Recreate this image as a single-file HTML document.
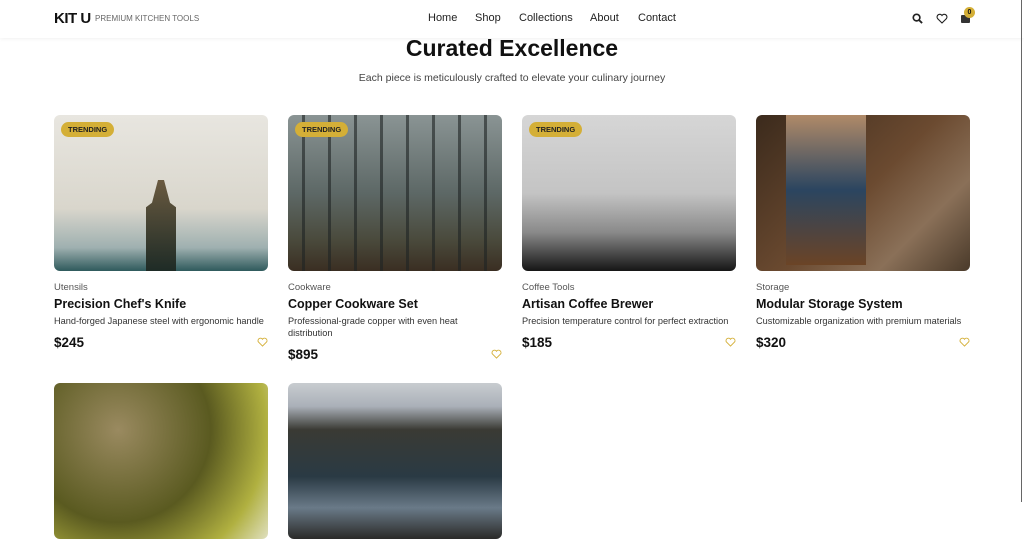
<!DOCTYPE html>
<html><head><style>
*{margin:0;padding:0;box-sizing:border-box}
body{width:1024px;height:502px;overflow:hidden;background:#fff;font-family:"Liberation Sans",sans-serif;color:#111;position:relative}
.hdr{position:absolute;left:0;top:0;width:1024px;height:38px;background:#fff;box-shadow:0 1px 4px rgba(0,0,0,.06);z-index:5}
.logo{position:absolute;left:54px;top:10px;font-size:15px;font-weight:bold;letter-spacing:-.5px}
.tag{position:absolute;left:95px;top:14px;font-size:8px;color:#666}
.nav{position:absolute;top:12px;font-size:11px;color:#222}
h1{position:absolute;top:35px;width:1024px;text-align:center;font-size:23px;font-weight:bold}
.sub{position:absolute;top:72px;width:1024px;text-align:center;font-size:10.5px;color:#444}
.card{position:absolute;width:214px}
.img{width:214px;height:156px;border-radius:6px;overflow:hidden;position:relative}
.badge{position:absolute;left:7px;top:7px;background:#d4af37;border-radius:8px;font-size:7.5px;font-weight:bold;padding:3px 7px;color:#222}
.cat{margin-top:11px;font-size:9.5px;color:#555}
.t{margin-top:4px;font-size:12.5px;font-weight:bold}
.d{margin-top:4px;font-size:9.2px;color:#333;line-height:12px;white-space:normal}
.p{margin-top:8px;font-size:13.5px;font-weight:bold;position:relative}
.p svg{position:absolute;right:0;top:2px}
</style></head><body>
<div class="hdr">
<div class="logo">KIT U</div><div class="tag">PREMIUM KITCHEN TOOLS</div>
<div class="nav" style="left:428px">Home</div>
<div class="nav" style="left:475px">Shop</div>
<div class="nav" style="left:519px">Collections</div>
<div class="nav" style="left:590px">About</div>
<div class="nav" style="left:638px">Contact</div>
<svg style="position:absolute;left:912px;top:13px" width="11" height="11" viewBox="0 0 12 12"><circle cx="5" cy="5" r="3.6" fill="none" stroke="#222" stroke-width="1.8"/><path d="M7.6 7.6 11 11" stroke="#222" stroke-width="2"/></svg>
<svg style="position:absolute;left:936px;top:13px" width="12" height="11" viewBox="0 0 24 22"><path d="M12 20 3 11a5 5 0 0 1 9-6 5 5 0 0 1 9 6z" fill="none" stroke="#222" stroke-width="2.2"/></svg>
<div style="position:absolute;left:961px;top:15px;width:9px;height:8px;background:#333;border-radius:1px"></div>
<div style="position:absolute;left:964px;top:7px;width:11px;height:11px;border-radius:50%;background:#d4af37;font-size:7px;text-align:center;line-height:11px;font-weight:bold">0</div>
</div>
<div style="position:absolute;right:2px;top:0;width:1px;height:502px;background:#666;z-index:6"></div>
<h1>Curated Excellence</h1>
<div class="sub">Each piece is meticulously crafted to elevate your culinary journey</div>

<div class="card" style="left:54px;top:115px"><div class="img" style="background:linear-gradient(180deg,#e8e6e0,#d9d6cc 60%,#9fb0b0 85%,#2f5a5c)"><div style="position:absolute;left:92px;top:65px;width:30px;height:91px;background:linear-gradient(#6a5a40,#1e2b26);clip-path:polygon(40% 0,60% 0,80% 25%,100% 30%,100% 100%,0 100%,0 30%,20% 25%)"></div><div class="badge">TRENDING</div></div>
<div class="cat">Utensils</div><div class="t">Precision Chef's Knife</div><div class="d" style="white-space:nowrap">Hand-forged Japanese steel with ergonomic handle</div><div class="p">$245<svg width="11" height="10" viewBox="0 0 24 22"><path d="M12 20 3 11a5 5 0 0 1 9-6 5 5 0 0 1 9 6z" fill="none" stroke="#d4af37" stroke-width="2"/></svg></div></div>

<div class="card" style="left:288px;top:115px"><div class="img" style="background:linear-gradient(180deg,#8a9494,#5d6866 50%,#4a4a3c 80%,#3a2e22);"><div style="position:absolute;inset:0;background:repeating-linear-gradient(90deg,transparent 0 14px,rgba(30,35,35,.6) 14px 17px,transparent 17px 26px)"></div><div class="badge">TRENDING</div></div>
<div class="cat">Cookware</div><div class="t">Copper Cookware Set</div><div class="d">Professional-grade copper with even heat<br>distribution</div><div class="p">$895<svg width="11" height="10" viewBox="0 0 24 22"><path d="M12 20 3 11a5 5 0 0 1 9-6 5 5 0 0 1 9 6z" fill="none" stroke="#d4af37" stroke-width="2"/></svg></div></div>

<div class="card" style="left:522px;top:115px"><div class="img" style="background:linear-gradient(180deg,#d6d6d6,#c4c4c4 50%,#8a8a8a 75%,#151515)"><div class="badge">TRENDING</div></div>
<div class="cat">Coffee Tools</div><div class="t">Artisan Coffee Brewer</div><div class="d" style="white-space:nowrap">Precision temperature control for perfect extraction</div><div class="p">$185<svg width="11" height="10" viewBox="0 0 24 22"><path d="M12 20 3 11a5 5 0 0 1 9-6 5 5 0 0 1 9 6z" fill="none" stroke="#d4af37" stroke-width="2"/></svg></div></div>

<div class="card" style="left:756px;top:115px"><div class="img" style="background:linear-gradient(135deg,#3b2a1c,#6b4a30 50%,#8a7058 75%,#4a3a2a)"><div style="position:absolute;left:30px;top:0;width:80px;height:150px;background:linear-gradient(#b08a68,#2b4560 50%,#6b4426)"></div></div>
<div class="cat">Storage</div><div class="t">Modular Storage System</div><div class="d" style="white-space:nowrap">Customizable organization with premium materials</div><div class="p">$320<svg width="11" height="10" viewBox="0 0 24 22"><path d="M12 20 3 11a5 5 0 0 1 9-6 5 5 0 0 1 9 6z" fill="none" stroke="#d4af37" stroke-width="2"/></svg></div></div>

<div class="card" style="left:54px;top:383px"><div class="img" style="background:radial-gradient(circle at 30% 30%,#9a8a60,#5a5a20 50%,#b0b040 80%,#e0e0c0)"></div></div>
<div class="card" style="left:288px;top:383px"><div class="img" style="background:linear-gradient(180deg,#c8ccd0 0,#aab0b8 15%,#3a3a34 30%,#2a3a44 60%,#6a7a88 80%,#2a2a28)"></div></div>
</body></html>
